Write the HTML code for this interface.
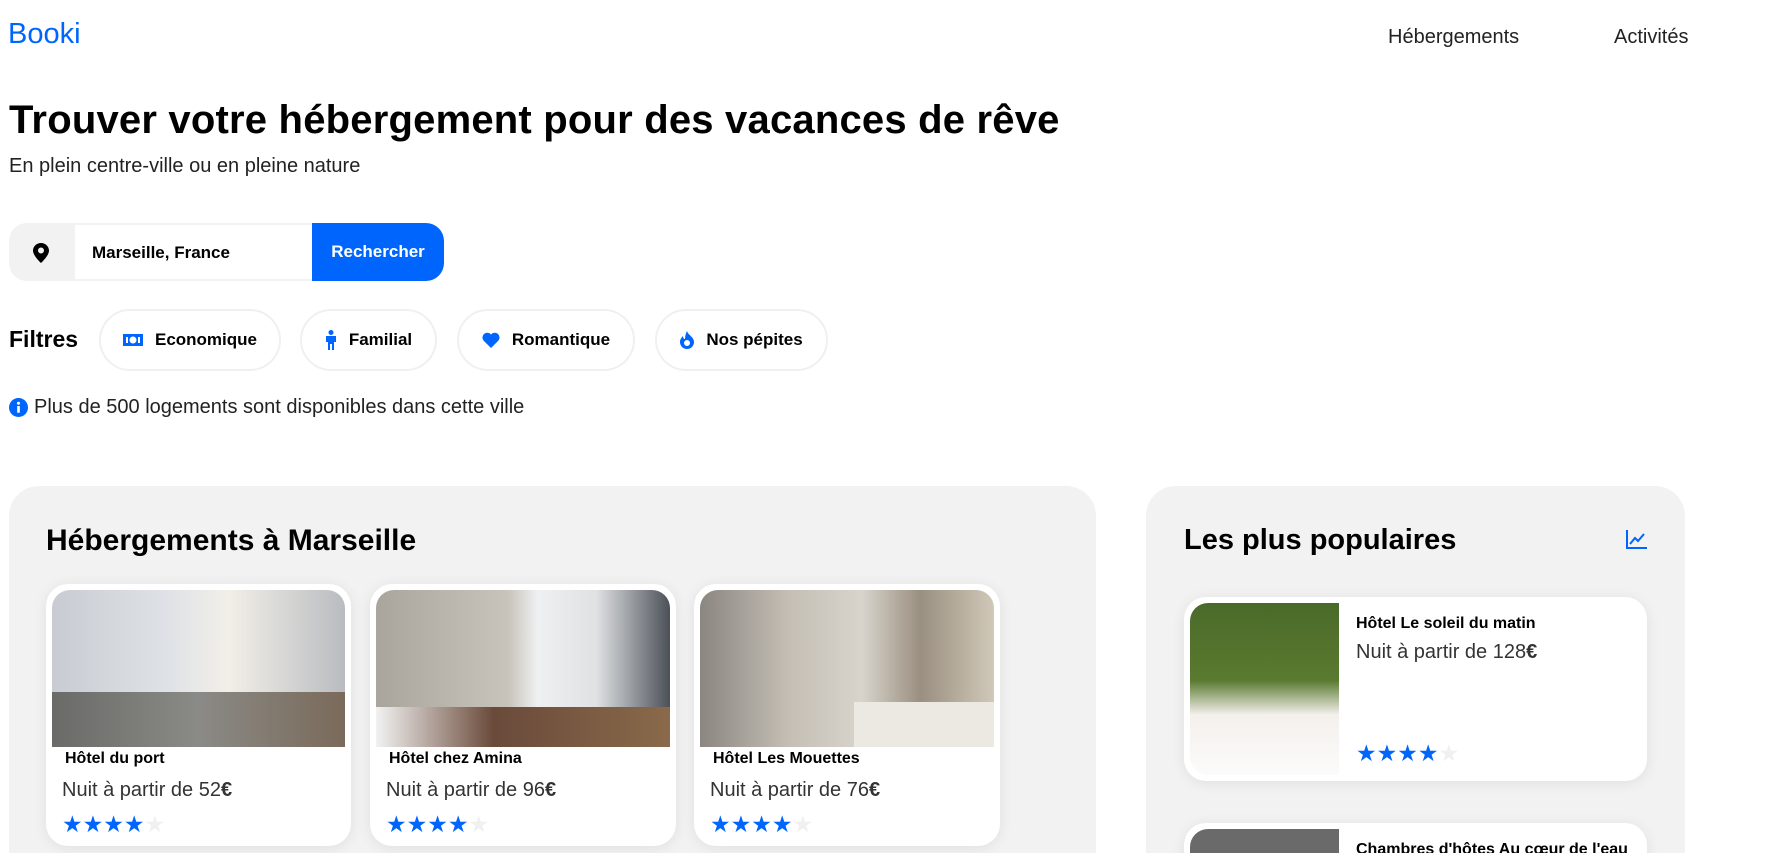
<!DOCTYPE html>
<html style="overflow:hidden;height:853px"><head><meta charset="utf-8"><style>
*{box-sizing:border-box;margin:0;padding:0}
body{width:1775px;height:853px;overflow:hidden;background:#fff;font-family:"Liberation Sans",sans-serif;color:#000;position:relative}
.a{position:absolute}
.logo{left:8px;top:18px;font-size:29px;color:#0065FC;letter-spacing:0px}
.nav{top:26px;font-size:20px;color:#222}
h1{position:absolute;left:9px;top:98px;font-size:40px;font-weight:bold;letter-spacing:0.2px;white-space:nowrap}
.sub{left:9px;top:155px;font-size:20px;color:#222}
.pin{left:9px;top:223px;width:66px;height:58px;background:#f2f2f2;border-radius:18px 0 0 18px}
.inp{left:74px;top:223px;width:240px;height:58px;border:2px solid #f2f2f2;border-left:none;font-size:17px;font-weight:bold;padding:18px 0 0 18px}
.btn{left:312px;top:223px;width:132px;height:58px;background:#0065FC;color:#fff;border-radius:0 18px 18px 0;font-size:17px;font-weight:bold;text-align:center;line-height:58px}
.filt{left:9px;top:326px;font-size:23px;font-weight:bold}
.pill{top:309px;height:62px;border:2px solid #f0f0f0;border-radius:31px;font-size:17px;font-weight:bold;display:flex;align-items:center;justify-content:center;gap:12px}
.info{left:9px;top:396px;font-size:20px;color:#222;display:flex;align-items:center;gap:6px}
.panel{background:#f2f2f2;border-radius:30px}
.ph{font-size:30px;font-weight:bold}
.card{background:#fff;border-radius:22px;box-shadow:0 2px 14px rgba(0,0,0,.08);overflow:hidden}
.img{position:absolute;left:6px;top:6px;right:6px;height:157px;border-radius:18px 18px 0 0}
.nm{position:absolute;left:19px;top:166px;font-size:16px;font-weight:bold}
.pr{position:absolute;left:16px;top:195px;font-size:20px;color:#333}
.st{position:absolute;left:16px;top:227px;font-size:23px;color:#0065FC;letter-spacing:0px}
.st span{color:#f0f0f0}
</style></head><body>
<div class="a logo">Booki</div>
<div class="a nav" style="left:1388px">Hébergements</div>
<div class="a nav" style="left:1614px">Activités</div>
<h1>Trouver votre hébergement pour des vacances de rêve</h1>
<div class="a sub">En plein centre-ville ou en pleine nature</div>
<div class="a pin"><svg class="a" style="left:24px;top:20px" width="16" height="20" viewBox="0 0 16 20"><path d="M8 0C3.6 0 0 3.4 0 7.6 0 12.8 8 20 8 20s8-7.2 8-12.4C16 3.4 12.4 0 8 0zm0 10.5a3 3 0 110-6 3 3 0 010 6z" fill="#000"/></svg></div>
<div class="a inp">Marseille, France</div>
<div class="a btn">Rechercher</div>
<div class="a filt">Filtres</div>
<div class="a pill" style="left:99px;width:182px"><svg width="20" height="16" viewBox="0 0 20 16"><rect x="0" y="2" width="20" height="12" fill="#0065FC"/><circle cx="10" cy="8" r="3.5" fill="#fff"/><rect x="3" y="5" width="2" height="6" fill="#fff"/><rect x="15" y="5" width="2" height="6" fill="#fff"/></svg>Economique</div>
<div class="a pill" style="left:300px;width:137px"><svg width="12" height="20" viewBox="0 0 12 20"><circle cx="6" cy="2.5" r="2.5" fill="#0065FC"/><path d="M1 6h10v6H9v8H7v-6H5v6H3v-8H1z" fill="#0065FC"/></svg>Familial</div>
<div class="a pill" style="left:457px;width:178px"><svg width="18" height="16" viewBox="0 0 18 16"><path d="M9 16L1.5 8.5A4.5 4.5 0 019 2.5a4.5 4.5 0 017.5 6z" fill="#0065FC"/></svg>Romantique</div>
<div class="a pill" style="left:655px;width:173px"><svg width="14" height="18" viewBox="0 0 14 18"><path d="M7 0c1 4 7 6 7 11a7 7 0 01-14 0c0-3 2-5 3-6 0 2 1 3 2 3C5 5 6 2 7 0z" fill="#0065FC"/><circle cx="7" cy="12" r="3" fill="#fff"/></svg>Nos pépites</div>
<div class="a info"><svg width="19" height="19" viewBox="0 0 20 20"><circle cx="10" cy="10" r="10" fill="#0065FC"/><rect x="8.6" y="8.5" width="2.8" height="7" fill="#fff"/><circle cx="10" cy="5.5" r="1.6" fill="#fff"/></svg>Plus de 500 logements sont disponibles dans cette ville</div>

<div class="a panel" style="left:9px;top:486px;width:1087px;height:400px"></div>
<div class="a ph" style="left:46px;top:524px">Hébergements à Marseille</div>
<div class="a card" style="left:46px;top:584px;width:305px;height:262px"><div class="img" style="background:linear-gradient(90deg,#c8ccd2 0%,#dfe2e6 40%,#f2efe8 60%,#b9bcc0 100%)"><div style="position:absolute;bottom:0;left:0;right:0;height:55px;background:linear-gradient(90deg,#6a6a68,#8a8a86 50%,#7a6a5a)"></div></div><div class="nm">Hôtel du port</div><div class="pr">Nuit à partir de 52<b>€</b></div><div class="st">★★★★<span>★</span></div></div>
<div class="a card" style="left:370px;top:584px;width:306px;height:262px"><div class="img" style="background:linear-gradient(90deg,#a9a49c 0%,#c9c4bb 45%,#eef0f2 55%,#dfe1e3 75%,#4c5058 100%)"><div style="position:absolute;bottom:0;left:0;right:0;height:40px;background:linear-gradient(90deg,#f2f2f2,#6a4a3a 40%,#8a6a4a)"></div></div><div class="nm">Hôtel chez Amina</div><div class="pr">Nuit à partir de 96<b>€</b></div><div class="st">★★★★<span>★</span></div></div>
<div class="a card" style="left:694px;top:584px;width:306px;height:262px"><div class="img" style="background:linear-gradient(90deg,#8a8680 0%,#c4beb4 30%,#d8d4cc 55%,#9a8f80 75%,#d0c8b8 100%)"><div style="position:absolute;bottom:0;right:0;width:140px;height:45px;background:#ece8e2"></div></div><div class="nm">Hôtel Les Mouettes</div><div class="pr">Nuit à partir de 76<b>€</b></div><div class="st">★★★★<span>★</span></div></div>

<div class="a panel" style="left:1146px;top:486px;width:539px;height:400px"></div>
<div class="a ph" style="left:1184px;top:524px;font-size:29px">Les plus populaires</div>
<svg class="a" style="left:1626px;top:530px" width="21" height="19" viewBox="0 0 21 19"><path d="M1 0v18h20" stroke="#0065FC" stroke-width="2" fill="none"/><path d="M4 14l5-6 3 3 6-7" stroke="#0065FC" stroke-width="2" fill="none"/></svg>
<div class="a card" style="left:1184px;top:597px;width:463px;height:184px"><div style="position:absolute;left:6px;top:6px;width:149px;height:172px;border-radius:18px 0 0 18px;background:linear-gradient(180deg,#4a6a2a 0%,#5a7a30 45%,#f4f0ec 65%,#fbfbfb 100%)"></div><div style="position:absolute;left:172px;top:18px;font-size:16px;font-weight:bold">Hôtel Le soleil du matin</div><div style="position:absolute;left:172px;top:44px;font-size:20px;color:#333">Nuit à partir de 128<b>€</b></div><div style="position:absolute;left:172px;top:143px;font-size:23px;color:#0065FC">★★★★<span style="color:#f0f0f0">★</span></div></div>
<div class="a card" style="left:1184px;top:823px;width:463px;height:184px"><div style="position:absolute;left:6px;top:6px;width:149px;height:172px;border-radius:18px 0 0 18px;background:#6a6a6a"></div><div style="position:absolute;left:172px;top:18px;font-size:16px;font-weight:bold">Chambres d'hôtes Au cœur de l'eau</div></div>
</body></html>
